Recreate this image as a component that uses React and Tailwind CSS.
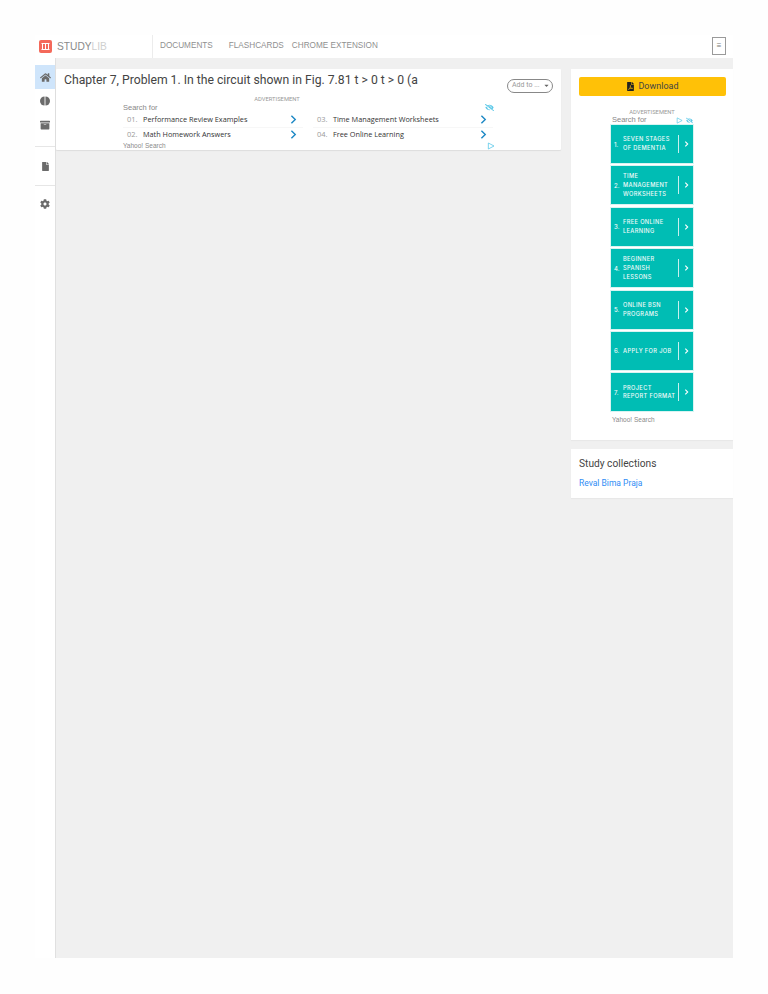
import React from "react";
import { FaHome, FaArchive, FaFile, FaCog, FaFilePdf, FaEyeSlash, FaCaretDown } from "react-icons/fa";

const F = { fontFamily: "Roboto, sans-serif" };

function Play({ className }) {
  return (
    <svg viewBox="0 0 12 12" className={className} fill="none" stroke="#5ac8e8" strokeWidth="1.2">
      <path d="M2 1.5 L10.5 6 L2 10.5 Z" />
    </svg>
  );
}

function Chev({ className }) {
  return (
    <svg viewBox="0 0 10 14" className={className} fill="none" stroke="#1b87c4" strokeWidth="2">
      <path d="M2 1.5 L7.5 7 L2 12.5" />
    </svg>
  );
}

function Brain() {
  return (
    <svg viewBox="0 0 11 11" className="w-[10px] h-[10px]" fill="#6b6b6b">
      <path d="M5 .5 V10.5 A5 5 0 0 1 5 .5 Z" />
      <path d="M6 .5 V10.5 A5 5 0 0 0 6 .5 Z" />
    </svg>
  );
}

function Row({ n, label, last }) {
  return (
    <div className={"flex items-center h-[14.5px] pl-[4px] pr-[6px] bg-white " + (last ? "" : "border-b border-[#f7f7f7]")}>
      <span className="w-[16px] text-[7.5px] text-[#9a9a9a] font-['Open_Sans']">{n}</span>
      <span className="flex-1 text-[7.3px] font-medium text-[#333] font-['Open_Sans'] whitespace-nowrap">{label}</span>
      <Chev className="w-[7px] h-[11px]" />
    </div>
  );
}

function Teal({ n, lines }) {
  return (
    <div className="h-[38px] bg-[#00bdb4] mb-[3.4px] flex items-center text-[#f2fbfa] font-['Inter'] outline outline-1 outline-[#d8f4f2]">
      <span className="w-[12px] pl-[3px] text-[6px] font-medium">{n}.</span>
      <div className="flex-1 text-[5.7px] font-medium tracking-[0.35px] leading-[8.7px] whitespace-nowrap">
        {lines.map((l) => <div key={l}>{l}</div>)}
      </div>
      <span className="w-px h-[18px] bg-[#c8f0ee]" />
      <svg viewBox="0 0 8 10" className="w-[5px] h-[6px] mx-[4.5px]" fill="none" stroke="#fff" strokeWidth="1.8">
        <path d="M2 1 L6 5 L2 9" />
      </svg>
    </div>
  );
}

export default function App() {
  return (
    <div className="w-[768px] h-[994px] bg-[#fefefe] pt-[35px] pl-[35px] pr-[35px]" style={F}>
      <div className="w-[698px]">
        <header className="h-[23px] bg-white flex items-center">
          <div className="w-[118px] h-full flex items-center border-r border-[#ececec] pl-[4px]">
            <div className="w-[13px] h-[13px] rounded-[2px] bg-[#f4695a] flex items-center justify-center">
              <svg viewBox="0 0 13 13" className="w-[13px] h-[13px]" fill="none" stroke="#fff" strokeWidth="1">
                <path d="M2.5 3.5 H10.5 M2.5 9.5 H10.5 M3.5 3.5 V9.5 M6.5 3.5 V9.5 M9.5 3.5 V9.5" />
              </svg>
            </div>
            <span className="ml-[5px] text-[10.2px] text-[#8a8a8a] font-['Liberation_Sans']">STUDY<span className="text-[#cfcfcf]">LIB</span></span>
          </div>
          <nav className="flex items-center text-[8.2px] text-[#8f8f8f] font-['Liberation_Sans'] whitespace-nowrap">
            <span className="ml-[7px]">DOCUMENTS</span>
            <span className="ml-[16px]">FLASHCARDS</span>
            <span className="ml-[8px]">CHROME EXTENSION</span>
          </nav>
          <div className="ml-auto mr-[7px] w-[14px] h-[18px] border border-[#9a9a9a] flex items-center justify-center text-[8px] text-[#777] mt-[-2px]">≡</div>
        </header>

        <div className="flex h-[900px]">
          <aside className="w-[21px] bg-white pt-[7px] flex flex-col items-stretch text-[#6b6b6b] border-r border-[#e0e0e0] box-border shrink-0">
            <div className="h-[24px] bg-[#cfe5fb] flex items-center justify-center"><FaHome size={11} /></div>
            <div className="h-[24px] flex items-center justify-center"><Brain /></div>
            <div className="h-[24px] flex items-center justify-center"><FaArchive size={10} /></div>
            <div className="h-[11px] border-b border-[#e6e6e6] mt-[-1px]" />
            <div className="h-[39px] flex items-center justify-center border-b border-[#e6e6e6]"><FaFile size={9} /></div>
            <div className="h-[36px] flex items-center justify-center"><FaCog size={10} /></div>
          </aside>

          <main className="flex-1 bg-[#f0f0f0] pt-[11px] flex items-start">
            <section className="w-[505px] h-[81px] bg-white shadow-[0_1px_1px_rgba(0,0,0,0.08)] rounded-[1px]">
              <div className="flex items-center h-[21px] pl-[8px] pr-[8px] mt-[1px]">
                <h1 className="text-[12.2px] font-normal text-[#444] whitespace-nowrap">Chapter 7, Problem 1. In the circuit shown in Fig. 7.81 t &gt; 0 t &gt; 0 (a</h1>
                <div className="ml-auto mt-[10px] w-[46px] h-[14px] rounded-full border border-[#888] flex items-center pl-[4px] text-[7px] text-[#999] whitespace-nowrap">
                  Add to ...<FaCaretDown size={7} className="ml-[3px] text-[#666]" />
                </div>
              </div>
              <div className="ml-[67px] w-[374px] relative mt-[5px]">
                <div className="text-center text-[5.8px] leading-[6px] text-[#999] pr-[66px]">ADVERTISEMENT</div>
                <div className="flex items-center justify-between h-[9px] text-[7.5px] text-[#888] font-['Liberation_Sans'] mt-[1px]">
                  <span>Search for</span>
                  <FaEyeSlash size={9} className="text-[#5ac8e8] mr-[3px]" />
                </div>
                <div className="grid grid-cols-[180px_180px] gap-x-[10px] mt-[1px]">
                  <div>
                    <Row n="01." label="Performance Review Examples" />
                    <Row n="02." label="Math Homework Answers" last />
                  </div>
                  <div>
                    <Row n="03." label="Time Management Worksheets" />
                    <Row n="04." label="Free Online Learning" last />
                  </div>
                </div>
                <div className="flex items-center justify-between h-[7px] text-[6.5px] text-[#8a8a8a] font-['Liberation_Sans']">
                  <span>Yahoo! Search</span>
                  <Play className="w-[8px] h-[8px] mr-[2px]" />
                </div>
              </div>
            </section>

            <div className="ml-[10px] w-[162px]">
              <section className="h-[371px] bg-white shadow-[0_1px_1px_rgba(0,0,0,0.03)] px-[8px] pt-[8px]">
                <button className="w-[147px] h-[19px] bg-[#ffc107] rounded-[2px] flex items-center justify-center text-[9px] text-[#444]">
                  <FaFilePdf size={9} className="mr-[3px] text-[#222]" />Download
                </button>
                <div className="ml-[32px] w-[82px] mt-[13px]">
                  <div className="text-center text-[5.8px] leading-[6px] text-[#999]">ADVERTISEMENT</div>
                  <div className="flex items-center h-[8px] mb-[1px] text-[7.5px] text-[#888] font-['Liberation_Sans'] mt-[1px]">
                    <span className="ml-[1px]">Search for</span>
                    <Play className="w-[7px] h-[7px] ml-auto" />
                    <FaEyeSlash size={7} className="text-[#5ac8e8] ml-[3px]" />
                  </div>
                  <Teal n="1" lines={["SEVEN STAGES", "OF DEMENTIA"]} />
                  <Teal n="2" lines={["TIME", "MANAGEMENT", "WORKSHEETS"]} />
                  <Teal n="3" lines={["FREE ONLINE", "LEARNING"]} />
                  <Teal n="4" lines={["BEGINNER", "SPANISH", "LESSONS"]} />
                  <Teal n="5" lines={["ONLINE BSN", "PROGRAMS"]} />
                  <Teal n="6" lines={["APPLY FOR JOB"]} />
                  <Teal n="7" lines={["PROJECT", "REPORT FORMAT"]} />
                  <div className="text-[6.5px] text-[#8a8a8a] font-['Liberation_Sans'] mt-[2px] ml-[1px]">Yahoo! Search</div>
                </div>
              </section>
              <section className="mt-[9px] h-[49px] bg-white shadow-[0_1px_1px_rgba(0,0,0,0.03)] px-[8px] pt-[8px]">
                <h2 className="text-[10.2px] leading-[14px] font-normal text-[#444]">Study collections</h2>
                <a className="block mt-[7px] text-[8.5px] leading-[11px] text-[#2f8df5]">Reval Bima Praja</a>
              </section>
            </div>
          </main>
        </div>
      </div>
    </div>
  );
}
